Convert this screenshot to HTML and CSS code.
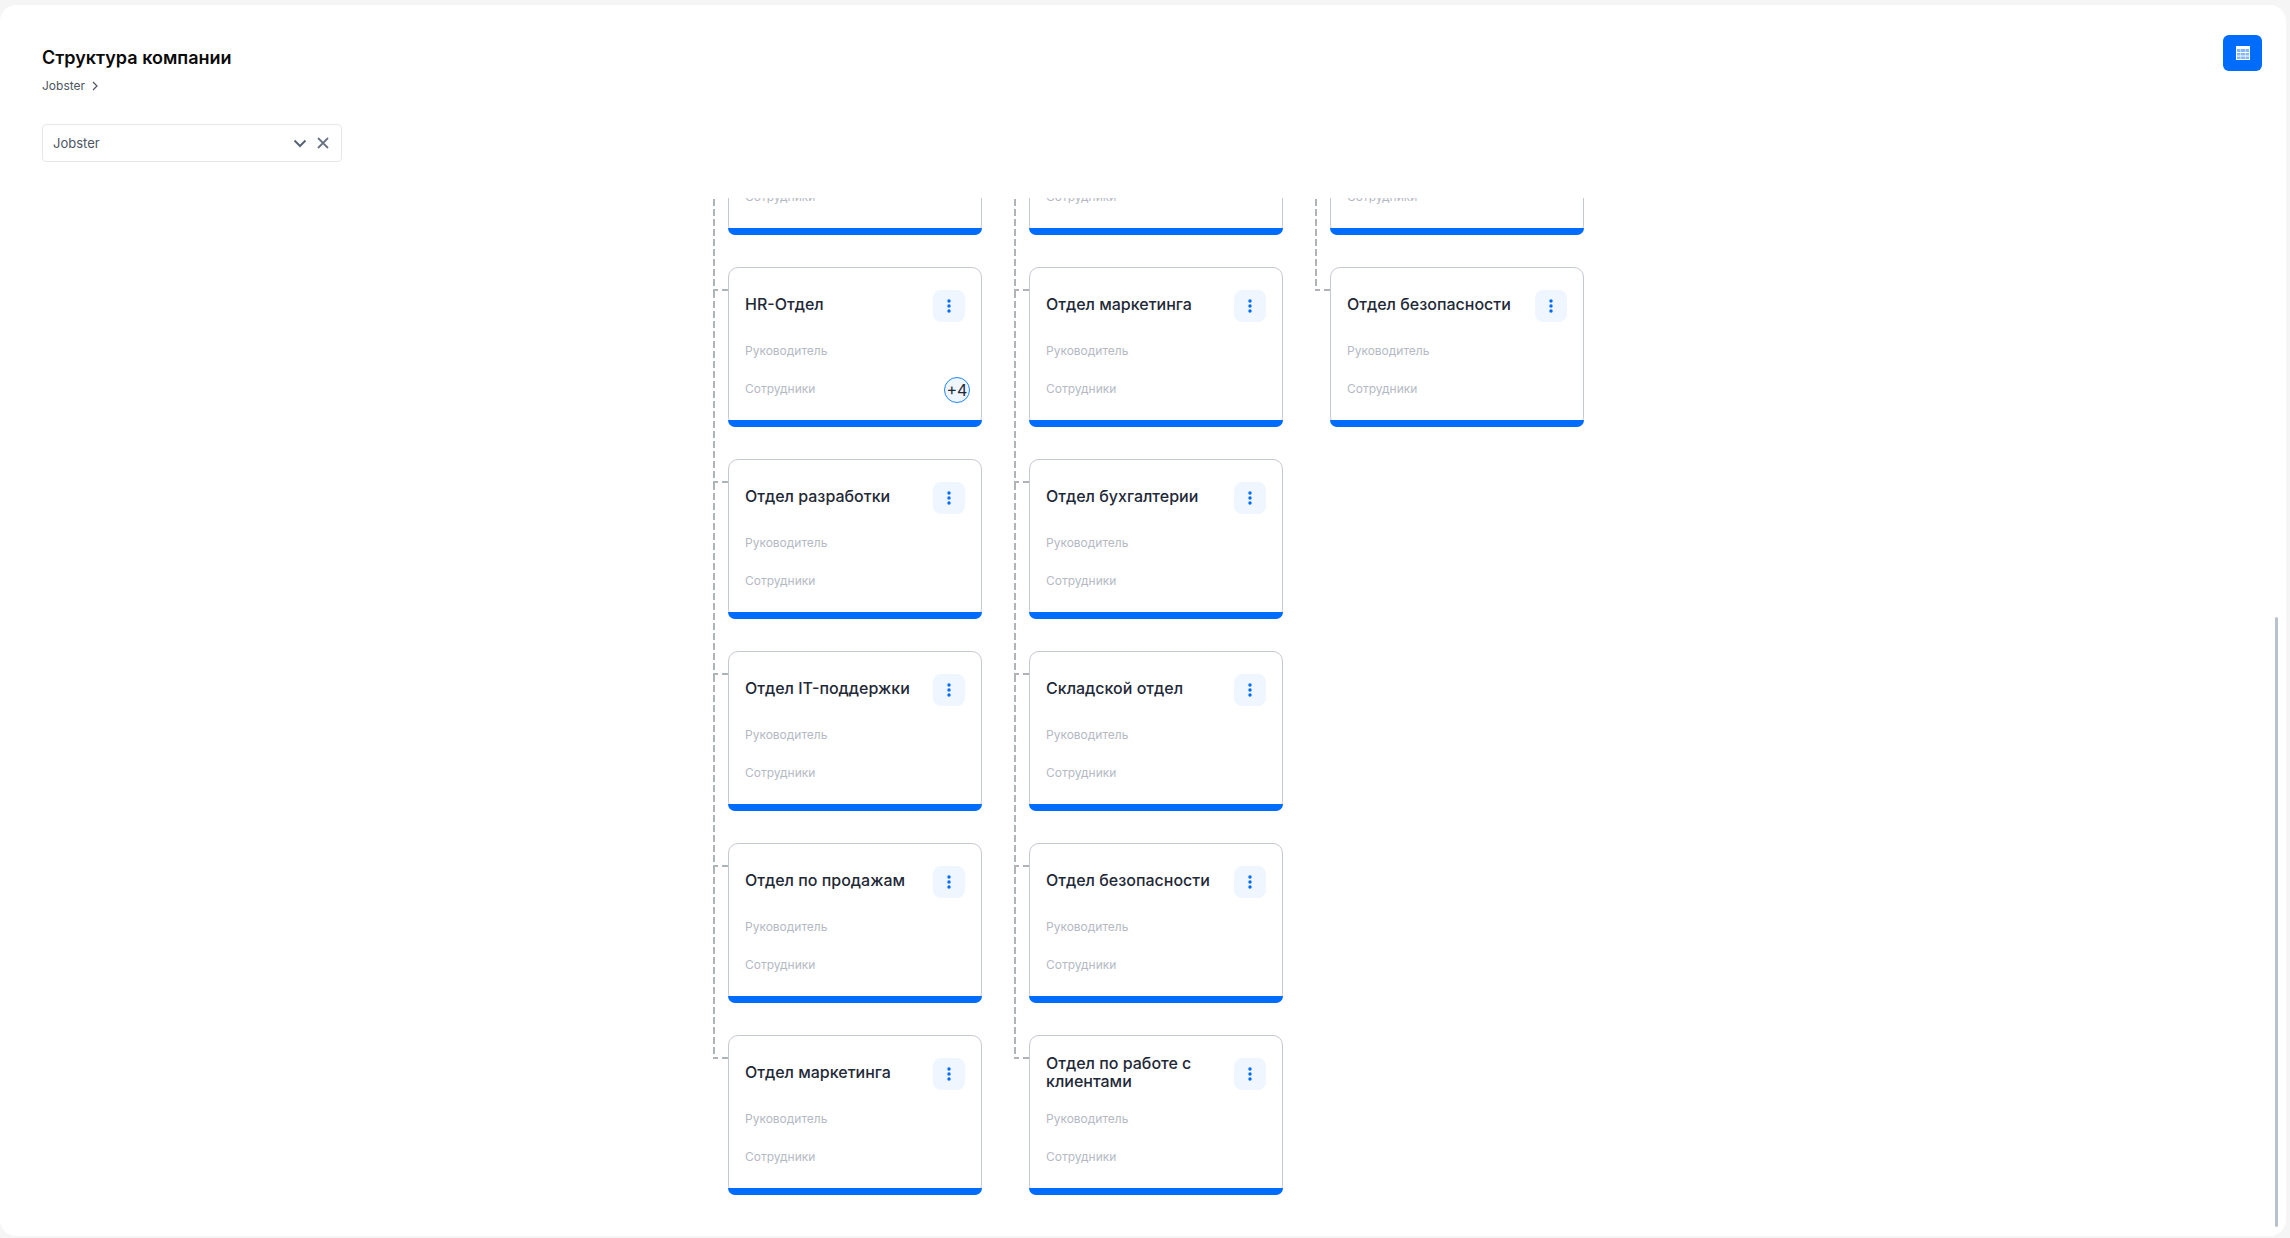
FILE: index.html
```html
<!DOCTYPE html>
<html lang="ru">
<head>
<meta charset="utf-8">
<title>Структура компании</title>
<link rel="stylesheet" href="styles.css">
</head>
<body>
<main class="panel">
  <header class="head">
    <div class="head-left">
      <h1 class="title">Структура компании</h1>
      <nav class="crumbs"><span>Jobster</span>
        <svg class="crumb-icon" width="8" height="10" viewBox="0 0 8 10"><path d="M2 1l4 4-4 4" fill="none" stroke="#4b5563" stroke-width="1.2"/></svg>
      </nav>
      <div class="select">
        <span class="select-value">Jobster</span>
        <svg class="chev" width="14" height="9" viewBox="0 0 14 9"><path d="M1.500 1.500L7 7l5.500-5.500" fill="none" stroke="#5b6472" stroke-width="2"/></svg>
        <svg class="clear" width="12" height="12" viewBox="0 0 12 12"><path d="M1 1l10 10M11 1L1 11" fill="none" stroke="#6b7484" stroke-width="1.8"/></svg>
      </div>
    </div>
    <button class="table-btn" aria-label="Таблица">
      <svg width="14" height="14" viewBox="0 0 14 14"><rect width="14" height="14" fill="#fff"/><path d="M1 3h3.500v3H1zM5 3h4v3H5zM9.500 3H13v3H9.500zM1 7h3.500v2.500H1zM5 7h4v2.500H5zM9.500 7H13v2.500H9.500zM1 10.500h3.500V13H1zM5 10.500h4V13H5zM9.500 10.500H13V13H9.500z" fill="#86b6fb"/></svg>
    </button>
  </header>
  <section class="viewport">
    <div class="tree">
      <div class="col">
        <article class="card"><div class="card-top"><h2 class="card-title">Отдел</h2><span class="menu"><svg width="4" height="14" viewBox="0 0 4 14"><circle cx="2" cy="2" r="1.700" fill="#006cfb"/><circle cx="2" cy="7" r="1.700" fill="#006cfb"/><circle cx="2" cy="12" r="1.700" fill="#006cfb"/></svg></span></div><p class="label">Руководитель</p><p class="label">Сотрудники</p><i class="bar"></i></article>
        <article class="card"><div class="card-top"><h2 class="card-title">HR-Отдел</h2><span class="menu"><svg width="4" height="14" viewBox="0 0 4 14"><circle cx="2" cy="2" r="1.700" fill="#006cfb"/><circle cx="2" cy="7" r="1.700" fill="#006cfb"/><circle cx="2" cy="12" r="1.700" fill="#006cfb"/></svg></span></div><p class="label">Руководитель</p><p class="label">Сотрудники</p><span class="more">+4</span><i class="bar"></i></article>
        <article class="card"><div class="card-top"><h2 class="card-title">Отдел разработки</h2><span class="menu"><svg width="4" height="14" viewBox="0 0 4 14"><circle cx="2" cy="2" r="1.700" fill="#006cfb"/><circle cx="2" cy="7" r="1.700" fill="#006cfb"/><circle cx="2" cy="12" r="1.700" fill="#006cfb"/></svg></span></div><p class="label">Руководитель</p><p class="label">Сотрудники</p><i class="bar"></i></article>
        <article class="card"><div class="card-top"><h2 class="card-title">Отдел IT-поддержки</h2><span class="menu"><svg width="4" height="14" viewBox="0 0 4 14"><circle cx="2" cy="2" r="1.700" fill="#006cfb"/><circle cx="2" cy="7" r="1.700" fill="#006cfb"/><circle cx="2" cy="12" r="1.700" fill="#006cfb"/></svg></span></div><p class="label">Руководитель</p><p class="label">Сотрудники</p><i class="bar"></i></article>
        <article class="card"><div class="card-top"><h2 class="card-title">Отдел по продажам</h2><span class="menu"><svg width="4" height="14" viewBox="0 0 4 14"><circle cx="2" cy="2" r="1.700" fill="#006cfb"/><circle cx="2" cy="7" r="1.700" fill="#006cfb"/><circle cx="2" cy="12" r="1.700" fill="#006cfb"/></svg></span></div><p class="label">Руководитель</p><p class="label">Сотрудники</p><i class="bar"></i></article>
        <article class="card"><div class="card-top"><h2 class="card-title">Отдел маркетинга</h2><span class="menu"><svg width="4" height="14" viewBox="0 0 4 14"><circle cx="2" cy="2" r="1.700" fill="#006cfb"/><circle cx="2" cy="7" r="1.700" fill="#006cfb"/><circle cx="2" cy="12" r="1.700" fill="#006cfb"/></svg></span></div><p class="label">Руководитель</p><p class="label">Сотрудники</p><i class="bar"></i></article>
      </div>
      <div class="col">
        <article class="card"><div class="card-top"><h2 class="card-title">Отдел</h2><span class="menu"><svg width="4" height="14" viewBox="0 0 4 14"><circle cx="2" cy="2" r="1.700" fill="#006cfb"/><circle cx="2" cy="7" r="1.700" fill="#006cfb"/><circle cx="2" cy="12" r="1.700" fill="#006cfb"/></svg></span></div><p class="label">Руководитель</p><p class="label">Сотрудники</p><i class="bar"></i></article>
        <article class="card"><div class="card-top"><h2 class="card-title">Отдел маркетинга</h2><span class="menu"><svg width="4" height="14" viewBox="0 0 4 14"><circle cx="2" cy="2" r="1.700" fill="#006cfb"/><circle cx="2" cy="7" r="1.700" fill="#006cfb"/><circle cx="2" cy="12" r="1.700" fill="#006cfb"/></svg></span></div><p class="label">Руководитель</p><p class="label">Сотрудники</p><i class="bar"></i></article>
        <article class="card"><div class="card-top"><h2 class="card-title">Отдел бухгалтерии</h2><span class="menu"><svg width="4" height="14" viewBox="0 0 4 14"><circle cx="2" cy="2" r="1.700" fill="#006cfb"/><circle cx="2" cy="7" r="1.700" fill="#006cfb"/><circle cx="2" cy="12" r="1.700" fill="#006cfb"/></svg></span></div><p class="label">Руководитель</p><p class="label">Сотрудники</p><i class="bar"></i></article>
        <article class="card"><div class="card-top"><h2 class="card-title">Складской отдел</h2><span class="menu"><svg width="4" height="14" viewBox="0 0 4 14"><circle cx="2" cy="2" r="1.700" fill="#006cfb"/><circle cx="2" cy="7" r="1.700" fill="#006cfb"/><circle cx="2" cy="12" r="1.700" fill="#006cfb"/></svg></span></div><p class="label">Руководитель</p><p class="label">Сотрудники</p><i class="bar"></i></article>
        <article class="card"><div class="card-top"><h2 class="card-title">Отдел безопасности</h2><span class="menu"><svg width="4" height="14" viewBox="0 0 4 14"><circle cx="2" cy="2" r="1.700" fill="#006cfb"/><circle cx="2" cy="7" r="1.700" fill="#006cfb"/><circle cx="2" cy="12" r="1.700" fill="#006cfb"/></svg></span></div><p class="label">Руководитель</p><p class="label">Сотрудники</p><i class="bar"></i></article>
        <article class="card"><div class="card-top"><h2 class="card-title">Отдел по работе с клиентами</h2><span class="menu"><svg width="4" height="14" viewBox="0 0 4 14"><circle cx="2" cy="2" r="1.700" fill="#006cfb"/><circle cx="2" cy="7" r="1.700" fill="#006cfb"/><circle cx="2" cy="12" r="1.700" fill="#006cfb"/></svg></span></div><p class="label">Руководитель</p><p class="label">Сотрудники</p><i class="bar"></i></article>
      </div>
      <div class="col">
        <article class="card"><div class="card-top"><h2 class="card-title">Отдел</h2><span class="menu"><svg width="4" height="14" viewBox="0 0 4 14"><circle cx="2" cy="2" r="1.700" fill="#006cfb"/><circle cx="2" cy="7" r="1.700" fill="#006cfb"/><circle cx="2" cy="12" r="1.700" fill="#006cfb"/></svg></span></div><p class="label">Руководитель</p><p class="label">Сотрудники</p><i class="bar"></i></article>
        <article class="card"><div class="card-top"><h2 class="card-title">Отдел безопасности</h2><span class="menu"><svg width="4" height="14" viewBox="0 0 4 14"><circle cx="2" cy="2" r="1.700" fill="#006cfb"/><circle cx="2" cy="7" r="1.700" fill="#006cfb"/><circle cx="2" cy="12" r="1.700" fill="#006cfb"/></svg></span></div><p class="label">Руководитель</p><p class="label">Сотрудники</p><i class="bar"></i></article>
      </div>
    </div>
    <div class="scroll-thumb"></div>
  </section>
</main>
</body>
</html>
```
FILE: styles.css
```css
* { box-sizing: border-box; }
html, body { margin: 0; height: 100%; overflow: hidden; }
body {
  background: #f5f5f6;
  padding: 5px 4px 2px 0;
  font-family: Inter, "Noto Sans", sans-serif;
}
.panel {
  position: relative;
  height: 100%;
  background: #fff;
  border-radius: 16px;
  display: flex;
  flex-direction: column;
  overflow: hidden;
}
.head {
  display: flex;
  justify-content: space-between;
  align-items: flex-start;
  padding: 30px 24px 0 42px;
  height: 193px;
  flex: none;
}
.title { margin: 11px 0 0; font-size: 18px; line-height: 24px; font-weight: 600; color: #0a0a0a; }
.crumbs { display: flex; align-items: center; gap: 6px; margin-top: 8px; font-size: 12px; line-height: 16px; color: #4b5563; }
.select {
  display: flex;
  align-items: center;
  width: 300px;
  height: 38px;
  margin-top: 30px;
  padding: 0 12px 0 10px;
  border: 1px solid #e5e7eb;
  border-radius: 4px;
  font-size: 13px;
  color: #4b5563;
}
.select-value { flex: 1; }
.clear { margin-left: 10px; }
.table-btn {
  width: 39px;
  height: 36px;
  border: 0;
  padding: 0;
  border-radius: 6px;
  background: #006cfb;
  display: flex;
  align-items: center;
  justify-content: center;
}
.viewport { position: relative; flex: 1; overflow: hidden; }
.tree { display: flex; gap: 47px; margin: -123px 0 0 728px; }
.col { width: 254px; display: flex; flex-direction: column; gap: 32px; }
.card {
  position: relative;
  height: 160px;
  padding: 22px 16px 0;
  background: #fff;
  border: 1px solid #c5c9d3;
  border-radius: 10px;
}
.card::before {
  content: "";
  position: absolute;
  left: -15px;
  top: 21px;
  width: 14px;
  height: 2px;
  background: repeating-linear-gradient(to left, #b0b3b8 0 6px, transparent 6px 10px);
}
.card::after {
  content: "";
  position: absolute;
  left: -16px;
  top: -169px;
  width: 2px;
  height: 192px;
  background: repeating-linear-gradient(to bottom, #b0b3b8 0 7px, transparent 7px 10px);
}
.bar {
  position: absolute;
  left: -1px;
  right: -1px;
  bottom: -1px;
  height: 7px;
  background: #006cfb;
  border-radius: 0 0 10px 10px;
}
.card-top { display: flex; justify-content: space-between; align-items: center; height: 32px; }
.card-title { margin: 0; max-width: 165px; font-size: 16px; line-height: 18px; font-weight: 450; color: #1f2937; position: relative; top: -2px; }
.menu {
  flex: none;
  width: 32px;
  height: 32px;
  border-radius: 8px;
  background: #eff6ff;
  display: flex;
  align-items: center;
  justify-content: center;
}
.label { margin: 0; font-size: 12px; line-height: 16px; color: #b4b9c3; }
.card-top + .label { margin-top: 21px; }
.label + .label { margin-top: 22px; }
.more {
  position: absolute;
  right: 11px;
  top: 109px;
  width: 26px;
  height: 26px;
  border: 1px solid #1f86f5;
  border-radius: 50%;
  background: #eff6ff;
  color: #1f2937;
  font-size: 16px;
  line-height: 24px;
  text-align: center;
}
.scroll-thumb {
  position: absolute;
  right: 8px;
  top: 419px;
  width: 3px;
  height: 610px;
  background: #b9c2cc;
  border-radius: 2px;
}
```
